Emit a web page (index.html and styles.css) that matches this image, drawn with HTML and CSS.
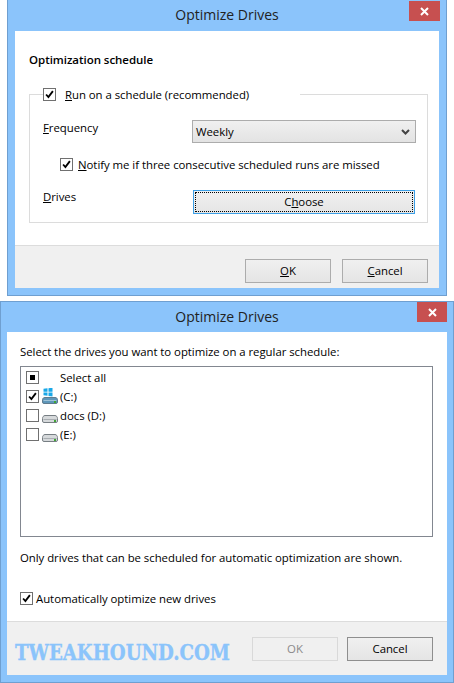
FILE: index.html
```html
<!DOCTYPE html>
<html lang="en">
<head>
  <meta charset="UTF-8">
  <title>Optimize Drives</title>
  <link rel="stylesheet" href="styles.css">
</head>
<body>
  <svg class="defs" width="0" height="0">
    <symbol id="tick" viewBox="0 0 13 13">
      <path d="M2.5 6.5 5.2 9.500 10.500 2.500" fill="none" stroke="#000" stroke-width="2.2"/>
    </symbol>
    <symbol id="drive" viewBox="0 0 16 8">
      <path d="M3 .5h10c1.500 0 2.500 1.500 2.500 3v2.500a1.500 1.500 0 0 1-1.500 1.500H2A1.500 1.500 0 0 1 .5 6V3.500C.5 2 1.500 .5 3 .5z" fill="#d6d9db" stroke="#777e83"/>
      <path d="M1.500 4.500h13" stroke="#a9aeb2"/>
      <rect x="12" y="5" width="2" height="2" fill="#3fa535"/>
    </symbol>
  </svg>

  <!-- first dialog -->
  <div class="window window-schedule">
    <div class="titlebar">
      <span class="title">Optimize Drives</span>
      <span class="close">
        <svg width="9" height="9" viewBox="0 0 9 9"><path d="M1 1l7 7M8 1l-7 7" stroke="#fff" stroke-width="2"/></svg>
      </span>
    </div>
    <div class="content content-schedule">
      <h2>Optimization schedule</h2>
      <fieldset class="group">
        <legend class="group-legend">
          <span class="check"><svg><use href="#tick"/></svg></span>
          <span><u>R</u>un on a schedule (recommended)</span>
        </legend>
        <div class="field field-frequency">
          <span><u>F</u>requency</span>
          <div class="select">
            <span>Weekly</span>
            <svg width="9" height="6" viewBox="0 0 9 6"><path d="M1 1l3.500 3.500L8 1" fill="none" stroke="#444" stroke-width="2"/></svg>
          </div>
        </div>
        <div class="notify">
          <span class="check"><svg><use href="#tick"/></svg></span>
          <span><u>N</u>otify me if three consecutive scheduled runs are missed</span>
        </div>
        <div class="field field-drives">
          <span><u>D</u>rives</span>
          <button class="btn btn-focus"><span class="dots">C<u>h</u>oose</span></button>
        </div>
      </fieldset>
    </div>
    <div class="footer footer-schedule">
      <button class="btn btn-small"><u>O</u>K</button>
      <button class="btn btn-small"><u>C</u>ancel</button>
    </div>
  </div>

  <!-- second dialog -->
  <div class="window window-drives">
    <div class="titlebar">
      <span class="title">Optimize Drives</span>
      <span class="close close-drives">
        <svg width="9" height="9" viewBox="0 0 9 9"><path d="M1 1l7 7M8 1l-7 7" stroke="#fff" stroke-width="2"/></svg>
      </span>
    </div>
    <div class="content content-drives">
      <p class="intro">Select the drives you want to optimize on a regular schedule:</p>
      <div class="list">
        <div class="row">
          <span class="check check-mixed"><i></i></span>
          <span class="drive-icon"></span>
          <span>Select all</span>
        </div>
        <div class="row">
          <span class="check"><svg><use href="#tick"/></svg></span>
          <span class="drive-icon">
            <svg width="16" height="16" viewBox="0 0 16 16">
              <path d="M1.500 .8 5.500.3v3.400h-4zM6.500.2 10.500-.3v4h-4zM1.500 4.500h4v3.300l-4-.5zM6.500 4.500h4v3.900l-4-.5z" fill="#19a8e8"/>
              <path d="M3 9.500h10c1.500 0 2.500 1 2.500 2.200v2.300a1.500 1.500 0 0 1-1.500 1.500H2A1.500 1.500 0 0 1 .5 14v-2.300C.5 10.500 1.500 9.500 3 9.500z" fill="#5e97ba" stroke="#5f7c8f"/>
              <path d="M1.500 12.500h13" stroke="#9fc3d8"/>
              <rect x="12" y="13" width="2" height="2" fill="#3fa535"/>
            </svg>
          </span>
          <span>(C:)</span>
        </div>
        <div class="row">
          <span class="check"></span>
          <span class="drive-icon"><svg width="16" height="8"><use href="#drive"/></svg></span>
          <span>docs (D:)</span>
        </div>
        <div class="row">
          <span class="check"></span>
          <span class="drive-icon"><svg width="16" height="8"><use href="#drive"/></svg></span>
          <span>(E:)</span>
        </div>
      </div>
      <p class="note">Only drives that can be scheduled for automatic optimization are shown.</p>
      <div class="auto">
        <span class="check"><svg><use href="#tick"/></svg></span>
        <span>Automatically optimize new drives</span>
      </div>
    </div>
    <div class="footer footer-drives">
      <button class="btn btn-small btn-disabled">OK</button>
      <button class="btn btn-small btn-active">Cancel</button>
    </div>
    <div class="watermark">TWEAKHOUND.COM</div>
  </div>
</body>
</html>
```

FILE: styles.css
```css
:root {
  --frame: #8bc4fb;
  --frame-edge: #6f9fd0;
  --line: #dcdcdc;
  --footer: #f0f0f0;
  --text: #000;
}

body {
  margin: 0;
  background: #fff;
  color: var(--text);
  font-family: "Open Sans", sans-serif;
  font-size: 11.4px;
  letter-spacing: -0.04px;
}

.defs {
  display: block;
  height: 0;
}

.window {
  position: relative;
  box-sizing: border-box;
  display: flex;
  flex-direction: column;
  background: var(--frame);
  border: 1px solid var(--frame-edge);
  padding: 0 7px 7px;
}

.window-schedule {
  width: 440px;
  height: 296px;
  margin-left: 7px;
  margin-bottom: 5px;
  border-top: none;
}

.window-drives {
  height: 382px;
  padding: 0 6px 7px;
}

.titlebar {
  position: relative;
  height: 31px;
  display: flex;
  align-items: center;
  justify-content: center;
  flex: none;
}

.window-drives .titlebar {
  height: 30px;
}

.title {
  font-size: 14px;
  letter-spacing: 0;
  color: #222;
  margin-top: -2px;
}

.close {
  position: absolute;
  right: -1px;
  top: 1px;
  width: 31px;
  height: 20px;
  background: #c75050;
  display: flex;
  align-items: center;
  justify-content: center;
}

.close-drives {
  right: 0;
  top: 0;
  width: 30px;
}

.content {
  flex: 1;
  background: #fff;
  box-sizing: border-box;
}

.content-schedule {
  padding: 21px 11px 13px 14px;
}

h2 {
  margin: 0 0 19px;
  font-size: 11.5px;
  line-height: 16px;
  font-weight: 600;
}

.group {
  margin: 0;
  padding: 0 11px 0 13px;
  height: 136px;
  box-sizing: border-box;
  border: 1px solid var(--line);
}

.group-legend {
  box-sizing: border-box;
  width: 257px;
  height: 14px;
  padding: 0;
  display: flex;
  align-items: center;
  gap: 9px;
  background: #fff;
}

.check {
  box-sizing: border-box;
  flex: none;
  width: 13px;
  height: 13px;
  border: 1px solid #707070;
  background: #fff;
  display: flex;
  align-items: center;
  justify-content: center;
}

.check svg {
  width: 11px;
  height: 11px;
}

.check-mixed i {
  width: 5px;
  height: 5px;
  background: #000;
}

.field {
  display: flex;
  justify-content: space-between;
}

.field-frequency {
  margin-top: 19px;
  align-items: flex-start;
}

.field-frequency > span {
  line-height: 16px;
}

.select {
  box-sizing: border-box;
  width: 224px;
  height: 23px;
  padding: 0 5px 0 3px;
  display: flex;
  align-items: center;
  justify-content: space-between;
  background: linear-gradient(#f0f0f0, #e3e3e3);
  border: 1px solid #acacac;
}

.notify {
  margin: 14px 0 0 17px;
  display: flex;
  align-items: center;
  gap: 5px;
}

.field-drives {
  margin-top: 18px;
  align-items: flex-start;
}

.field-drives > span {
  line-height: 14px;
}

.btn {
  box-sizing: border-box;
  padding: 0 0 2px;
  font: inherit;
  letter-spacing: inherit;
  color: var(--text);
  background: linear-gradient(#f0f0f0, #e5e5e5);
  border: 1px solid #acacac;
}

.btn-focus {
  width: 222px;
  height: 24px;
  margin-right: 1px;
  padding: 1px;
  border-color: #3c9fe6;
}

.dots {
  display: block;
  height: 100%;
  box-sizing: border-box;
  border: 1px dotted #000;
  line-height: 18px;
}

.btn-small {
  width: 86px;
  height: 24px;
}

.footer {
  flex: none;
  display: flex;
  justify-content: flex-end;
  gap: 11px;
  background: var(--footer);
  border-top: 1px solid var(--line);
  box-sizing: border-box;
}

.footer-schedule {
  height: 43px;
  padding: 13px 11px 0 0;
}

.content-drives {
  padding: 12px 14px 0 13px;
}

.intro,
.note {
  margin: 0;
  line-height: 16px;
}

.list {
  box-sizing: border-box;
  height: 171px;
  margin-top: 6px;
  padding: 1px 0 0 5px;
  border: 1px solid #828790;
}

.row {
  display: flex;
  align-items: center;
  height: 19px;
}

.drive-icon {
  width: 18px;
  height: 19px;
  margin-left: 3px;
  padding-bottom: 2px;
  box-sizing: border-box;
  flex: none;
  display: flex;
  align-items: flex-end;
}

.note {
  margin-top: 13px;
}

.auto {
  margin-top: 25px;
  display: flex;
  align-items: center;
  gap: 3px;
}

.footer-drives {
  height: 54px;
  padding: 15px 14px 0 0;
  gap: 9px;
}

.btn-disabled {
  background: #f0f0f0;
  color: #8a8a8a;
  border-color: #d9d9d9;
}

.btn-active {
  border-color: #8e8e8e;
}

.watermark {
  position: absolute;
  left: 14px;
  top: 336px;
  font-family: "DejaVu Serif", serif;
  font-weight: 700;
  font-size: 23px;
  letter-spacing: 0;
  color: var(--frame);
  -webkit-text-stroke: 0.4px var(--frame);
  white-space: nowrap;
  transform: scaleX(0.79);
  transform-origin: left;
}
```
